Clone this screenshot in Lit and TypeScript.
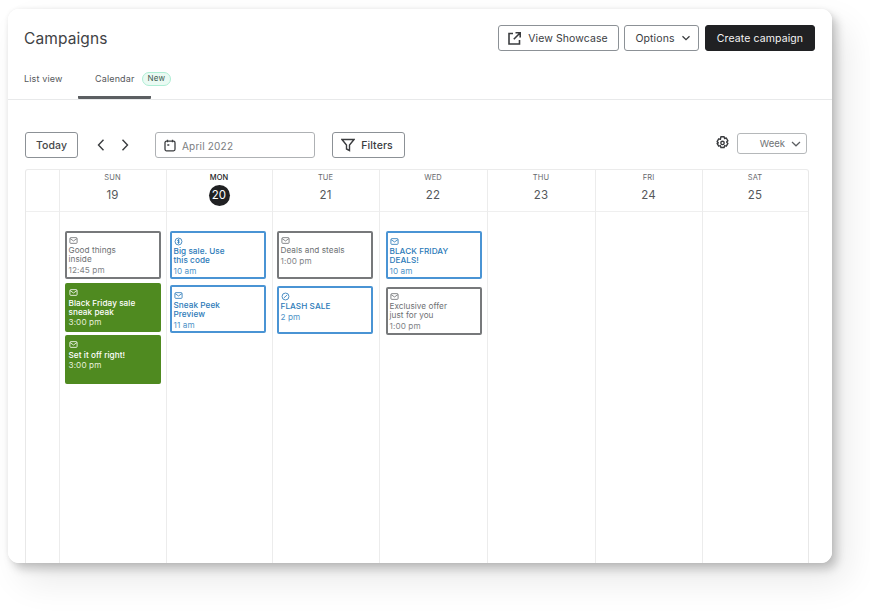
import { LitElement, html, css, svg } from "lit";
import { customElement } from "lit/decorators.js";

type Ev = { icon: "mail" | "dollar" | "percent"; kind: "grey" | "blue" | "green"; lines: string[]; time: string; h: number; mt: number };

const mail = svg`<rect x="1.2" y="2.2" width="9.6" height="7.6" rx="1.2"/><path d="M1.5 3.5 6 6.6l4.5-3.1"/>`;
const dollar = svg`<circle cx="6" cy="6" r="4.6"/><path d="M7.5 4.3c-.5-.7-2.6-.8-2.7.4-.1 1.200 2.600.8 2.500 2.200-.1 1.100-2.200 1.100-2.800.3M6 3v6"/>`;
const percent = svg`<circle cx="6" cy="6" r="4.6"/><path d="M3.800 7.900 8.200 4M4.300 4.500h.01M7.700 7.500h.01"/>`;

const days: { name: string; num: string; pad: number; current?: boolean; events: Ev[] }[] = [
  { name: "SUN", num: "19", pad: 5, events: [
    { icon: "mail", kind: "grey", lines: ["Good things", "inside"], time: "12:45 pm", h: 48, mt: 0 },
    { icon: "mail", kind: "green", lines: ["Black Friday sale", "sneak peak"], time: "3:00 pm", h: 49, mt: 4 },
    { icon: "mail", kind: "green", lines: ["Set it off right!"], time: "3:00 pm", h: 49, mt: 3 },
  ]},
  { name: "MON", num: "20", pad: 3, current: true, events: [
    { icon: "dollar", kind: "blue", lines: ["Big sale. Use", "this code"], time: "10 am", h: 48, mt: 0 },
    { icon: "mail", kind: "blue", lines: ["Sneak Peek", "Preview"], time: "11 am", h: 48, mt: 6 },
  ]},
  { name: "TUE", num: "21", pad: 4, events: [
    { icon: "mail", kind: "grey", lines: ["Deals and steals"], time: "1:00 pm", h: 48, mt: 0 },
    { icon: "percent", kind: "blue", lines: ["FLASH SALE"], time: "2 pm", h: 48, mt: 7 },
  ]},
  { name: "WED", num: "22", pad: 6, events: [
    { icon: "mail", kind: "blue", lines: ["BLACK FRIDAY", "DEALS!"], time: "10 am", h: 48, mt: 0 },
    { icon: "mail", kind: "grey", lines: ["Exclusive offer", "just for you"], time: "1:00 pm", h: 48, mt: 8 },
  ]},
  { name: "THU", num: "23", pad: 0, events: [] },
  { name: "FRI", num: "24", pad: 0, events: [] },
  { name: "SAT", num: "25", pad: 0, events: [] },
];

const icons = { mail, dollar, percent };

@customElement("app-root")
export class AppRoot extends LitElement {
  static styles = css`
    :host { display: block; width: 870px; height: 612px; box-sizing: border-box; padding: 9px 38px 49px 8px; background: #fff;
      font-family: Inter, "Liberation Sans", sans-serif; color: #3a3c3f; overflow: hidden; }
    .card { height: 100%; box-sizing: border-box; background: #fff; border-radius: 11px; display: flex; flex-direction: column; overflow: hidden; }
    .shadow { height: 100%; border-radius: 11px; box-shadow: 5px 6px 10px rgba(0,0,0,.2), 14px 18px 36px rgba(0,0,0,.09), 0 0 5px rgba(0,0,0,.06); }
    .top { display: flex; align-items: center; justify-content: space-between; padding: 16px 17px 0 16px; height: 26px; }
    h1 { margin: 0; font-size: 15.500px; font-weight: 400; letter-spacing: .1px; color: #3f4245; }
    .actions { display: flex; gap: 5px; }
    .btn { box-sizing: border-box; height: 26px; border: 1px solid #8c9196; border-radius: 3px; background: #fff; display: inline-flex; align-items: center; justify-content: center;
      font: 400 10.500px Inter, "Liberation Sans", sans-serif; letter-spacing: .1px; color: #3a3c3f; gap: 6px; padding: 0; }
    .btn svg { fill: none; stroke: currentColor; }
    .showcase { width: 121px; gap: 6px; padding-right: 2px; }
    .options { width: 75px; gap: 6px; padding-left: 3px; }
    .create { width: 110px; background: #202123; border-color: #202123; color: #f4f4f4; margin-left: 1px; }
    .tabs { display: flex; margin-top: 22px; height: 26px; padding-left: 16px; border-bottom: 1px solid #e8e9ea; font-size: 9px; letter-spacing: .15px; color: #55585b; }
    .tab { line-height: 12px; }
    .tab.list { width: 54px; }
    .tab.active { box-sizing: border-box; width: 73px; height: 26px; padding-left: 17px; border-bottom: 3px solid #5c5f62; border-radius: 0 0 1px 1px; display: flex; gap: 7px; align-items: flex-start; white-space: nowrap; }
    .badge { box-sizing: border-box; height: 14px; margin-top: -1px; padding: 0 5px; border-radius: 7px; background: #eafaf3; border: 1px solid #aeeed4; font-size: 8px; line-height: 10px; color: #3d5a4e; flex: none; }
    .bar { display: flex; align-items: flex-start; margin-top: 32px; padding: 0 25px 0 17px; height: 26px; }
    .today { width: 53px; font-weight: 500; color: #45474a; }
    .nav { display: flex; gap: 12px; margin-left: 12px; width: 65px; height: 26px; align-items: center; padding-left: 5px; box-sizing: border-box; }
    .nav svg { fill: none; stroke: #3a3c3f; stroke-width: 1.4; }
    .date { box-sizing: border-box; width: 160px; height: 26px; border: 1px solid #aeb1b4; border-radius: 3px; display: flex; align-items: center; gap: 6px; padding: 1px 0 0 8px; font-size: 10px; letter-spacing: .2px; color: #7a7d80; }
    .date svg { fill: none; stroke: #3a3c3f; stroke-width: 1.300; }
    .filters { width: 73px; margin-left: 17px; gap: 6px; padding-right: 3px; font-weight: 500; }
    .spacer { flex: 1; }
    .gear { margin-top: 3px; margin-right: 7px; fill: none; stroke: #3a3c3f; stroke-width: 1.400; stroke-linejoin: round; }
    .week { box-sizing: border-box; width: 70px; height: 21px; margin-top: 1px; border: 1px solid #b5b8ba; border-radius: 3px; display: flex; align-items: center; justify-content: flex-end; gap: 5px; padding-right: 4px; font-size: 9.500px; color: #6f7275; }
    .week svg { fill: none; stroke: #5c5f62; stroke-width: 1.200; }
    .grid { flex: 1; margin: 11px 23px 0 17px; display: grid; grid-template-columns: 33px 107px 106px 107px 108px 108px 107px 106px; border-top: 1px solid #ebebeb; border-left: 1px solid #e8e8e8; border-right: 1px solid #e8e8e8; min-height: 0; border-radius: 3px 3px 0 0; box-sizing: border-box; }
    .col { display: flex; flex-direction: column; min-width: 0; box-sizing: border-box; }
    .col + .col { border-left: 1px solid #ececec; }
    .head { box-sizing: border-box; height: 42px; border-bottom: 1px solid #efefef; display: flex; flex-direction: column; align-items: center; font-size: 7.500px; color: #66696c; padding: 3px 1px 0 0; flex: none; line-height: 9px; letter-spacing: .1px; }
    .num { margin-top: 3px; font-size: 11.500px; line-height: 20px; width: 21px; height: 21px; text-align: center; border-radius: 50%; color: #55585b; letter-spacing: .2px; }
    .head.current { color: #202123; font-weight: 500; }
    .head.current .num { background: #202123; color: #fff; font-weight: 400; }
    .evs { display: flex; flex-direction: column; padding-top: 19px; }
    .ev { box-sizing: border-box; width: 96px; border: 2px solid; border-radius: 2px; padding: 3px 2px 0 1.500px; font-size: 8.200px; line-height: 9px; background: #fff; }
    .ev svg { display: block; width: 9px; height: 9px; margin-bottom: 1px; fill: none; stroke: currentColor; stroke-width: 1.100; }
    .ev .name { font-weight: 400; letter-spacing: .05px; }
    .ev .time { margin-top: 1px; font-size: 8.200px; line-height: 11px; letter-spacing: .1px; }
    .grey { border-color: #77797b; color: #6d7073; }
    .grey .time { color: #808386; }
    .blue { border-color: #4a94d4; color: #2b7ab8; padding-top: 4px; }
    .blue .name { font-weight: 500; }
    .blue .time { color: #4f93c8; }
    .green { border-color: #4f8a20; background: #4f8a20; color: #fff; }
    .green svg { margin-bottom: 2px; }
    .green .name { font-weight: 500; }
    .green .time { color: #e6f0dc; margin-top: 0; }
  `;

  private ev(e: Ev) {
    return html`<div class="ev ${e.kind}" style="height:${e.h}px;margin-top:${e.mt}px">
      <svg viewBox="0 0 12 12">${icons[e.icon]}</svg>
      <div class="name">${e.lines.map((l) => html`<div>${l}</div>`)}</div>
      <div class="time">${e.time}</div>
    </div>`;
  }

  render() {
    return html`<div class="shadow"><div class="card">
      <div class="top">
        <h1>Campaigns</h1>
        <div class="actions">
          <button class="btn showcase">
            <svg width="15" height="15" viewBox="0 0 15 15" stroke-width="1.600"><path d="M6 2.500H2v10.500h10.500V9M8.500 1.800h4.700v4.700M13 2 6.800 8.200"/></svg>
            View Showcase
          </button>
          <button class="btn options">Options
            <svg width="10" height="10" viewBox="0 0 10 10" stroke-width="1.300"><path d="m1.500 3.200 3.500 3.500 3.500-3.500"/></svg>
          </button>
          <button class="btn create">Create campaign</button>
        </div>
      </div>
      <div class="tabs">
        <div class="tab list">List view</div>
        <div class="tab active">Calendar <span class="badge">New</span></div>
      </div>
      <div class="bar">
        <button class="btn today">Today</button>
        <div class="nav">
          <svg width="12" height="14" viewBox="0 0 12 14"><path d="M8.500 1.800 3.500 7l5 5.200"/></svg>
          <svg width="12" height="14" viewBox="0 0 12 14"><path d="M3.500 1.800 8.500 7l-5 5.200"/></svg>
        </div>
        <div class="date">
          <svg width="12" height="13" viewBox="0 0 12 13"><rect x="1" y="2.200" width="10" height="9.600" rx="1.500"/><path d="M3.500.8v2.500M8.500.8v2.500M3.300 6h2"/></svg>
          April 2022
        </div>
        <button class="btn filters">
          <svg width="14" height="14" viewBox="0 0 14 14" stroke-width="1.400"><path d="M1 1.500h12L8.500 7v5.500l-3-1.500V7z"/></svg>
          Filters
        </button>
        <div class="spacer"></div>
        <svg class="gear" width="15" height="15" viewBox="0 0 15 15"><path d="M5.900 1.300h3.200l.5 1.800 1.700-.5 1.600 2.800-1.300 1.300 1.300 1.300-1.600 2.800-1.700-.5-.5 1.800H5.900l-.5-1.800-1.700.5-1.600-2.800L3.400 7.500 2.100 6.200l1.600-2.800 1.700.5z" transform="translate(0 .4)"/><circle cx="7.500" cy="7.900" r="1.700"/></svg>
        <div class="week">Week
          <svg width="12" height="10" viewBox="0 0 12 10"><path d="m2 3 4 3.800L10 3"/></svg>
        </div>
      </div>
      <div class="grid">
        <div class="col"><div class="head"></div></div>
        ${days.map((d) => html`<div class="col">
          <div class="head ${d.current ? "current" : ""}">${d.name}<div class="num">${d.num}</div></div>
          <div class="evs" style="padding-left:${d.pad}px">${d.events.map((e) => this.ev(e))}</div>
        </div>`)}
      </div>
    </div></div>`;
  }
}
